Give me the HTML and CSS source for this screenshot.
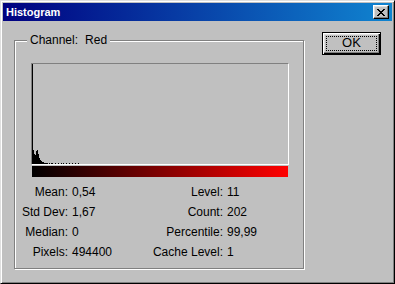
FILE: index.html
```html
<!DOCTYPE html>
<html>
<head>
<meta charset="utf-8">
<title>Histogram</title>
<link rel="stylesheet" href="styles.css">
</head>
<body>
<div class="window">
  <div class="titlebar">
    <span class="title">Histogram</span>
    <span class="close">
      <svg width="8" height="7" viewBox="0 0 8 7" shape-rendering="crispEdges">
        <path d="M0 0h2v1h-2zM6 0h2v1h-2zM1 1h2v1h-2zM5 1h2v1h-2zM2 2h4v1h-4zM3 3h2v1h-2zM2 4h4v1h-4zM1 5h2v1h-2zM5 5h2v1h-2zM0 6h2v1h-2zM6 6h2v1h-2z" fill="#000"/>
      </svg>
    </span>
  </div>

  <div class="content">
    <div class="group">
      <span class="legend"><span>Channel:</span><span>Red</span></span>

      <div class="histo">
        <svg width="256" height="100" viewBox="0 0 256 100" shape-rendering="crispEdges">
          <path fill="#000" d="M0 0h1v100h-1z
            M1 86h1v14h-1z M2 90h1v10h-1z M3 91h1v9h-1z M4 87h1v13h-1z
            M5 86h1v14h-1z M6 90h1v10h-1z M7 94h1v6h-1z M8 96h1v4h-1z
            M9 97h1v3h-1z M10 98h2v2h-2z M12 99h4v1h-4z
            M17 99h1v1h-1z M19 99h2v1h-2z M23 99h1v1h-1z M26 99h1v1h-1z
            M29 99h1v1h-1z M31 99h1v1h-1z M34 99h1v1h-1z M37 99h1v1h-1z
            M40 99h1v1h-1z M43 99h1v1h-1z M46 99h1v1h-1z"/>
        </svg>
      </div>
      <div class="ramp"></div>

      <div class="stats">
        <span class="label">Mean:</span><span class="value">0,54</span>
        <span class="label">Level:</span><span class="value">11</span>

        <span class="label">Std Dev:</span><span class="value">1,67</span>
        <span class="label">Count:</span><span class="value">202</span>

        <span class="label">Median:</span><span class="value">0</span>
        <span class="label">Percentile:</span><span class="value">99,99</span>

        <span class="label">Pixels:</span><span class="value">494400</span>
        <span class="label">Cache Level:</span><span class="value">1</span>
      </div>
    </div>

    <button class="ok"><span>OK</span></button>
  </div>
</div>
</body>
</html>
```
FILE: styles.css
```css
body {
  margin: 0;
  background-color: #c0c0c0;
  font-family: "Liberation Sans", Arial, sans-serif;
  font-size: 12px;
  color: #000;
}

.window {
  width: 395px;
  height: 284px;
  box-sizing: border-box;
  padding: 2px;
  border: 1px solid;
  border-color: #dfdfdf #000 #000 #dfdfdf;
  box-shadow: inset 1px 1px 0 #fff, inset -1px -1px 0 #808080;
  background-color: #c0c0c0;
}

/* title bar */
.titlebar {
  height: 18px;
  display: flex;
  align-items: center;
  justify-content: space-between;
  padding: 0 3px 0 3px;
  background: linear-gradient(to right, #000080, #1084d0);
}

.title {
  color: #fff;
  font-weight: bold;
  font-size: 11px;
}

.close {
  width: 16px;
  height: 14px;
  box-sizing: border-box;
  display: flex;
  align-items: center;
  justify-content: center;
  background-color: #c0c0c0;
  border: 1px solid;
  border-color: #fff #000 #000 #fff;
  box-shadow: inset -1px -1px 0 #808080, inset 1px 1px 0 #dfdfdf;
}

/* body of the dialog */
.content {
  display: flex;
  align-items: flex-start;
  padding-left: 11px;
}

.group {
  position: relative;
  width: 290px;
  height: 229px;
  box-sizing: border-box;
  margin-top: 19px;
  padding: 22px 0 0 16px;
  border: 1px solid #808080;
  box-shadow: inset 1px 1px 0 #fff, 1px 1px 0 #fff;
}

.legend {
  position: absolute;
  top: -8px;
  left: 12px;
  padding: 0 3px;
  display: flex;
  gap: 7px;
  line-height: 14px;
  background-color: #c0c0c0;
}

.histo {
  width: 256px;
  height: 100px;
  border: 1px solid;
  border-color: #808080 #fff #fff #808080;
}

.histo svg {
  display: block;
}

.ramp {
  width: 256px;
  height: 11px;
  margin: 1px 0 0 1px;
  background: linear-gradient(to right, #000, #ff0000);
}

.stats {
  display: grid;
  grid-template-columns: 49px 78px 77px auto;
  margin: 5px 0 0 -12px;
  line-height: 20px;
}

.label {
  text-align: right;
  white-space: nowrap;
}

.value {
  padding-left: 4px;
}

/* default push button */
.ok {
  width: 59px;
  height: 23px;
  margin: 11px 0 0 18px;
  padding: 3px;
  box-sizing: border-box;
  font-family: "Liberation Sans", Arial, sans-serif;
  font-size: 13px;
  color: #000;
  background-color: #c0c0c0;
  border: 1px solid #000;
  box-shadow: inset 1px 1px 0 #fff, inset -1px -1px 0 #000, inset -2px -2px 0 #808080, inset 2px 2px 0 #dfdfdf;
}

.ok span {
  display: block;
  height: 100%;
  line-height: 13px;
  outline: 1px dotted #000;
  outline-offset: -1px;
}
```
